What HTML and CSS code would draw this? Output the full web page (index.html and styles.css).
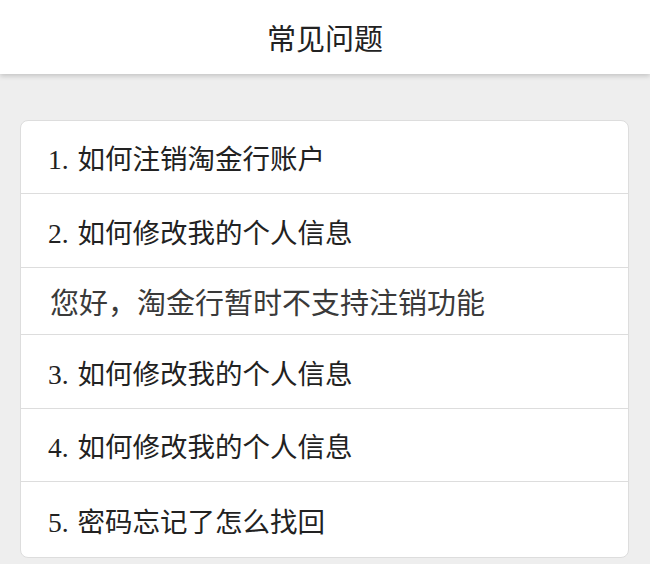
FILE: index.html
```html
<!DOCTYPE html>
<html lang="zh-CN">
<head>
<meta charset="utf-8">
<title>常见问题</title>
<link rel="stylesheet" href="styles.css">
</head>
<body>
<header class="topbar"><h1 class="title">常见问题</h1></header>
<main class="content">
  <ul class="faq">
    <li class="q first">1. 如何注销淘金行账户</li>
    <li class="q">2. 如何修改我的个人信息</li>
    <li class="a">您好，淘金行暂时不支持注销功能</li>
    <li class="q">3. 如何修改我的个人信息</li>
    <li class="q fifth">4. 如何修改我的个人信息</li>
    <li class="q last">5. 密码忘记了怎么找回</li>
  </ul>
</main>
</body>
</html>
```
FILE: styles.css
```css
html, body {
  margin: 0;
  padding: 0;
}
body {
  background: #eeeeee;
  font-family: "Liberation Serif", "Noto Sans CJK SC", serif;
  color: #333;
  height: 564px;
  overflow: hidden;
}
.topbar {
  background: #fff;
  height: 74px;
  display: flex;
  align-items: center;
  justify-content: center;
  box-shadow: 0 2px 5px rgba(0,0,0,0.18);
  position: relative;
}
.title {
  margin: 0;
  font-size: 29px;
  font-weight: normal;
  color: #222;
}
.content {
  padding: 46px 21px 0 20px;
}
.faq {
  list-style: none;
  margin: 0;
  padding: 0;
  background: #fff;
  border: 1px solid #dddddd;
  border-radius: 8px;
}
.q, .a {
  display: flex;
  align-items: center;
  padding: 0 27px;
  border-bottom: 1px solid #dddddd;
  font-size: 27.5px;
  color: #222;
  word-spacing: 2px;
}
.q { height: 73px; }
.first { height: 72px; }
.fifth { height: 72px; }
.a {
  height: 66px;
  font-size: 29px;
  color: #3a3a3a;
  padding-left: 29px;
}
.last { border-bottom: none; height: 75px; }
```
